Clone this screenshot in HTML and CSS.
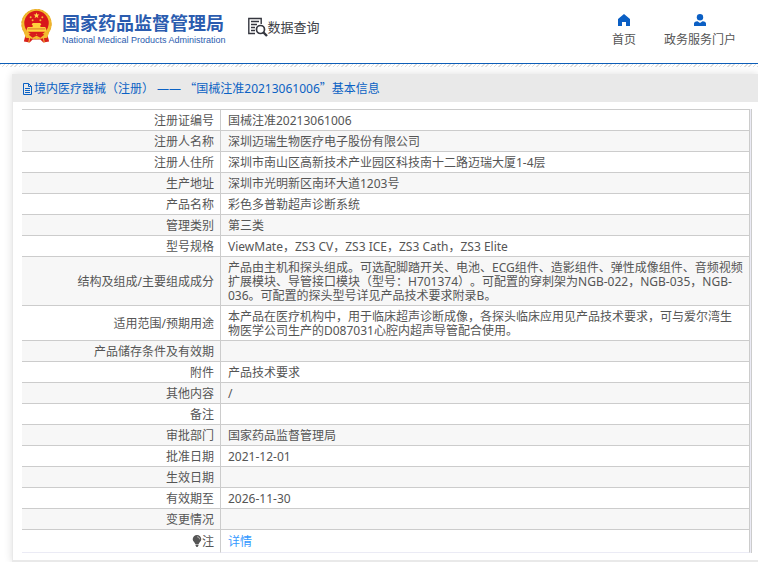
FILE: index.html
```html
<!DOCTYPE html>
<html lang="zh-CN">
<head>
<meta charset="utf-8">
<meta name="viewport" content="width=device-width, initial-scale=1">
<title>国家药品监督管理局 数据查询</title>
<link rel="stylesheet" href="styles.css">
</head>
<body>
<header class="site-header">
  <div class="brand">
    <svg class="emblem" viewBox="0 0 34 36" aria-hidden="true">
      <path d="M6 26 4 34l6 1 3-3h8l3 3 6-1-2-8z" fill="#d9211c"/>
      <circle cx="17" cy="16" r="15.600" fill="#f2bb2e"/>
      <circle cx="17" cy="16" r="15" fill="none" stroke="#e5a52c" stroke-width="1" stroke-dasharray="2 2"/>
      <circle cx="17" cy="15" r="12.600" fill="#d8171b"/>
      <path d="m17 4 .8 2.100 2.200.1-1.700 1.400.6 2.200L17 8.600l-1.900 1.200.6-2.200L14 6.200l2.200-.1z" fill="#ffd84a"/>
      <g fill="#f7b936"><circle cx="11" cy="9" r="1"/><circle cx="23" cy="9" r="1"/><circle cx="13" cy="12" r="1"/><circle cx="21" cy="12" r="1"/></g>
      <path d="M13 15h8l1 2h-1v2h5l1 2v3H7v-3l1-2h5v-2h-1z" fill="#ffd13d"/>
      <path d="M8 21h18" stroke="#d9782a" stroke-width="1"/>
      <path d="M4 25c4 0 6 4 9 4l4-3 4 3c3 0 5-4 9-4l-2 5-6 1-5-2-5 2-6-1z" fill="#f4bd31"/>
      <path d="M9 27c3-2 5-2 8 0 3-2 5-2 8 0l-4 3-4-2-4 2z" fill="#d71c1c"/>
      <path d="m10 30-1 5m15-5 1 5" stroke="#f5bd36" stroke-width="1"/>
    </svg>
    <div class="brand-text">
      <span class="brand-cn">国家药品监督管理局</span>
      <span class="brand-en">National Medical Products Administration</span>
    </div>
  </div>
  <div class="section-name">
    <svg class="search-icon" viewBox="0 0 20 20" fill="none" stroke="#34363f" aria-hidden="true">
      <path d="M7 16.500H.8V1.500h12.400V7M3 4.500h8M3 7.500h6M3 10.500h4M3 13.500h4" stroke-width="1.400"/>
      <circle cx="12.500" cy="12.500" r="4" stroke-width="1.700"/>
      <path d="m15.500 15.500 3.500 3.500" stroke-width="2.400"/>
    </svg>
    <span>数据查询</span>
  </div>
  <nav class="site-nav">
    <a href="#">
      <svg viewBox="0 0 12 12" aria-hidden="true"><path d="M6 0 0 5v7h4V8h4v4h4V5z" fill="#0b5fc4"/></svg>
      首页
    </a>
    <a href="#">
      <svg viewBox="0 0 12 12" aria-hidden="true"><circle cx="6" cy="3.200" r="3.200" fill="#0b5fc4"/><path d="M0 12V9.500Q0 7.500 3.500 7.200L6 9l2.500-1.800Q12 7.500 12 9.500V12z" fill="#0b5fc4"/></svg>
      政务服务门户
    </a>
  </nav>
</header>
<div class="hatch"></div>
<main class="panel">
  <h1 class="panel-title">
    <svg viewBox="0 0 11 12" fill="none" stroke="#0b62c4" aria-hidden="true"><path d="M1.500.5h5l3 3v8h-8zM6.500.5v3h3M3 5.500h5M3 7.500h5M3 9.500h5"/></svg>
    <span>境内医疗器械（注册） —— <span class="quote">“</span>国械注准20213061006<span class="quote">”</span>基本信息</span>
  </h1>
  <div class="table-frame">
    <table class="info">
      <tbody>
        <tr><th scope="row">注册证编号</th><td>国械注准20213061006</td></tr>
        <tr><th scope="row">注册人名称</th><td>深圳迈瑞生物医疗电子股份有限公司</td></tr>
        <tr><th scope="row">注册人住所</th><td>深圳市南山区高新技术产业园区科技南十二路迈瑞大厦1-4层</td></tr>
        <tr><th scope="row">生产地址</th><td>深圳市光明新区南环大道1203号</td></tr>
        <tr><th scope="row">产品名称</th><td>彩色多普勒超声诊断系统</td></tr>
        <tr><th scope="row">管理类别</th><td>第三类</td></tr>
        <tr><th scope="row">型号规格</th><td>ViewMate，ZS3 CV，ZS3 ICE，ZS3 Cath，ZS3 Elite</td></tr>
        <tr><th scope="row">结构及组成/主要组成成分</th><td>产品由主机和探头组成。可选配脚踏开关、电池、ECG组件、造影组件、弹性成像组件、音频视频扩展模块、导管接口模块（型号：H701374）。可配置的穿刺架为NGB-022，NGB-035，NGB-036。可配置的探头型号详见产品技术要求附录B。</td></tr>
        <tr><th scope="row">适用范围/预期用途</th><td>本产品在医疗机构中，用于临床超声诊断成像，各探头临床应用见产品技术要求，可与爱尔湾生物医学公司生产的D087031心腔内超声导管配合使用。</td></tr>
        <tr><th scope="row">产品储存条件及有效期</th><td></td></tr>
        <tr><th scope="row">附件</th><td>产品技术要求</td></tr>
        <tr><th scope="row">其他内容</th><td>/</td></tr>
        <tr><th scope="row">备注</th><td></td></tr>
        <tr><th scope="row">审批部门</th><td>国家药品监督管理局</td></tr>
        <tr><th scope="row">批准日期</th><td>2021-12-01</td></tr>
        <tr><th scope="row">生效日期</th><td></td></tr>
        <tr><th scope="row">有效期至</th><td>2026-11-30</td></tr>
        <tr><th scope="row">变更情况</th><td></td></tr>
        <tr class="note"><th scope="row"><svg class="bulb" viewBox="0 0 10 12" aria-hidden="true"><path d="M5 0a4.300 4.300 0 0 1 4.300 4.300C9.300 6.500 7 7.500 6.700 9H3.300C3 7.500.7 6.500.7 4.300A4.300 4.300 0 0 1 5 0zM3.500 9.500h3v1L5.500 12h-1l-1-1.500z" fill="#555"/><path d="M5 1.700q2.500.1 2.700 2.600" fill="none" stroke="#ccc" stroke-width=".8"/></svg>注</th><td><a href="#">详情</a></td></tr>
      </tbody>
    </table>
  </div>
</main>
</body>
</html>
```
FILE: styles.css
```css
* { box-sizing: border-box; }

body {
  margin: 0;
  background: #fff;
  color: #555;
  font: 12px/14px "Noto Sans", "Noto Sans CJK SC", sans-serif;
  text-spacing-trim: space-all;
}

a { text-decoration: none; }
svg { display: block; flex: none; }

.site-header {
  display: flex;
  align-items: flex-start;
  height: 64px;
  padding: 0 22px 0 20px;
  border-bottom: 1px solid #0d5eb8;
}

.brand {
  display: flex;
  gap: 9px;
  padding-top: 8px;
}

.emblem { width: 33px; height: 36px; }

.brand-text {
  display: flex;
  flex-direction: column;
  padding-top: 1px;
  color: #2b5caf;
  white-space: nowrap;
}

.brand-cn {
  font: bold 18px/26px "Noto Sans CJK SC", sans-serif;
}

.brand-en {
  font: 9px/10px "Liberation Sans", sans-serif;
}

.section-name {
  display: flex;
  align-items: center;
  padding: 17px 0 0 22px;
  color: #3c3e46;
  font-size: 13px;
  line-height: 20px;
  white-space: nowrap;
}

.search-icon { width: 20px; height: 20px; }

.site-nav {
  display: flex;
  gap: 28px;
  margin-left: auto;
  padding-top: 14px;
}

.site-nav a {
  display: flex;
  flex-direction: column;
  align-items: center;
  gap: 7px;
  color: #555;
  white-space: nowrap;
}

.site-nav svg { width: 12px; height: 12px; }

.hatch {
  height: 3px;
  background: repeating-linear-gradient(135deg, #ddd 0 1px, #fff 1px 3px);
}

.panel {
  margin: 7px 0 0 12px;
  padding-bottom: 7px;
  border: 1px solid #e9e9e9;
  border-width: 0 0 2px 1px;
  box-shadow: 0 0 8px #ddd;
}

.panel-title {
  display: flex;
  align-items: center;
  gap: 1px;
  margin: 0;
  padding: 8px 9px 6px;
  background: #e9e9e9;
  color: #0b62c4;
  font-size: 12px;
  font-weight: normal;
  line-height: 14px;
}

.panel-title svg { width: 11px; height: 12px; }

.quote {
  font-family: "Noto Sans CJK SC", sans-serif;
  line-height: 1;
}

.table-frame {
  margin: 7px 6px 0 9px;
  padding-right: 1px;
  border-right: 1px solid #ccc;
  background: #ebebf5;
}

.info {
  width: 100%;
  border-spacing: 0;
  border-top: 1px solid #ccc;
  background: #fff;
  table-layout: fixed;
}

.info tr:nth-child(even) { background: #f7f7f7; }

.info th,
.info td {
  height: 21px;
  padding: 4px 6px 2px 7px;
  border-right: 1px solid #ccc;
  border-bottom: 1px solid #ccc;
  font-weight: normal;
  vertical-align: middle;
}

.info th {
  width: 199px;
  text-align: right;
}

.info .note th,
.info .note td {
  height: 23px;
  border-bottom-color: #ebebf5;
}

.note a { color: #3399ff; }

.bulb {
  display: inline-block;
  width: 10px;
  height: 12px;
  vertical-align: -1px;
}
```
